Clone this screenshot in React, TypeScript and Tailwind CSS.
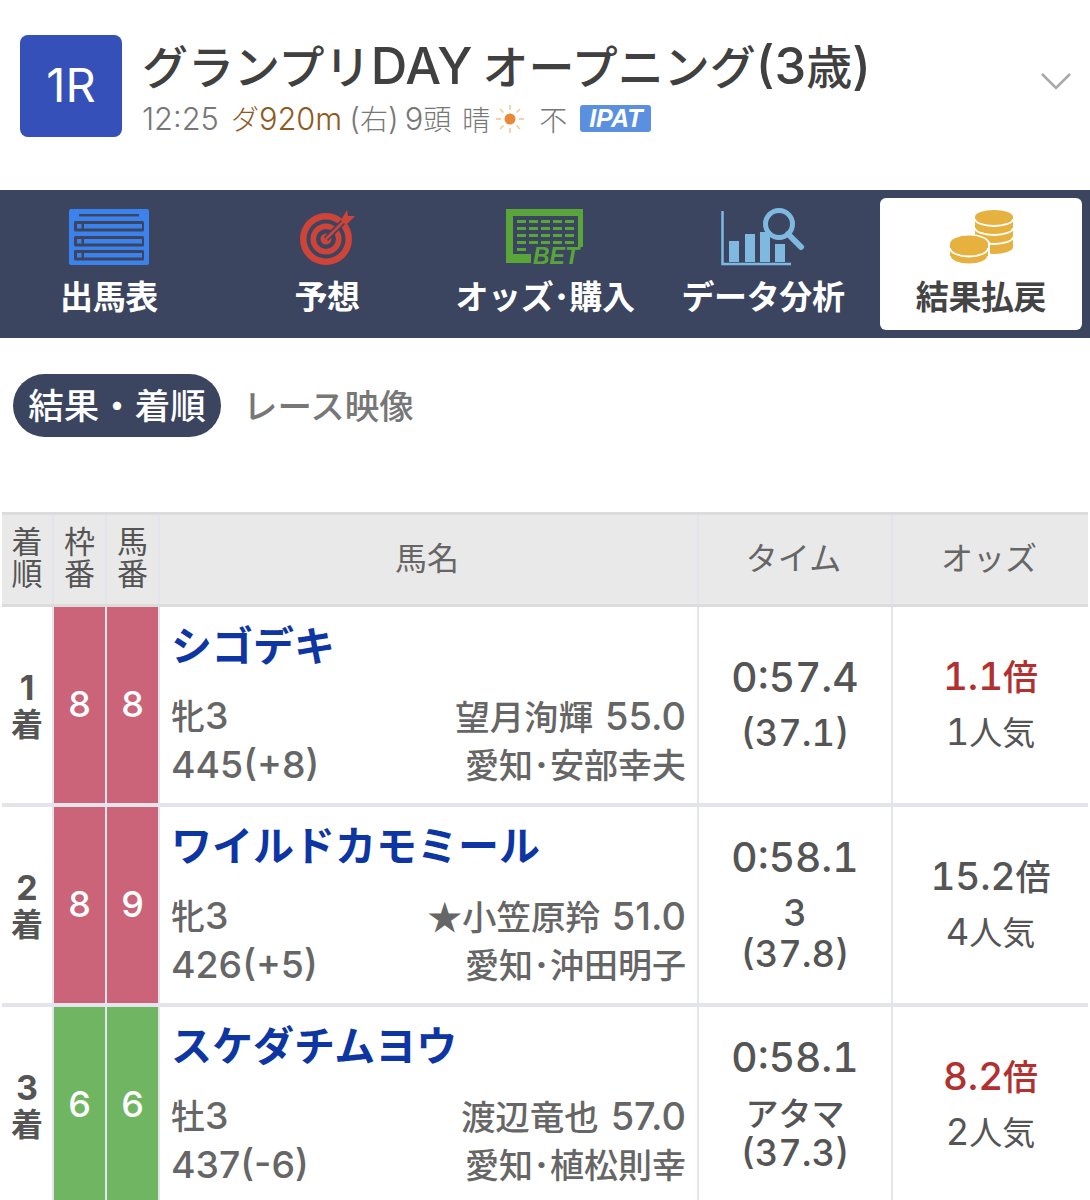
import React from "react";

function T({ children, tnum }: { children: string; tnum?: boolean }) {
  const parts = children.split(/([0-9A-Za-z:.()+\-]+)/);
  return (
    <>
      {parts.map((p, i) =>
        i % 2 === 1 ? (
          <span key={i} className={`text-[1.1em] [font-family:Inter,sans-serif] ${tnum ? "tabular-nums" : ""}`}>{p}</span>
        ) : (
          <span key={i}>{p}</span>
        )
      )}
    </>
  );
}

const NAVY = "#3c4560";

function ListIcon() {
  return (
    <svg width="82" height="58" viewBox="0 0 82 58">
      <rect x="1" y="1" width="80" height="56" rx="2" fill="#3b82ec" />
      <rect x="11" y="6" width="60" height="2.4" fill={NAVY} />
      {[13, 28, 42].map((y) => (
        <g key={y}>
          <rect x="6" y={y} width="70" height="10.5" rx="1.5" fill={NAVY} />
          <rect x="9" y={y + 3} width="4.5" height="4.5" fill="#3b82ec" />
          <rect x="16" y={y + 3} width="58" height="4.5" fill="#3b82ec" />
        </g>
      ))}
    </svg>
  );
}

function TargetIcon() {
  return (
    <svg width="56" height="58" viewBox="0 0 56 58">
      <circle cx="27" cy="31" r="26" fill="#cf4438" />
      <circle cx="27" cy="31" r="19.5" fill={NAVY} />
      <circle cx="27" cy="31" r="15.5" fill="#cf4438" />
      <circle cx="27" cy="31" r="10" fill={NAVY} />
      <circle cx="27" cy="31" r="5.5" fill="#cf4438" />
      <path d="M27 31 L47 11" stroke={NAVY} strokeWidth="6" />
      <path d="M27 31 L47 11" stroke="#cf4438" strokeWidth="2.5" />
      <path d="M42 12 L48 2 L49 8 L56 8 L47 17 Z" fill="#cf4438" />
    </svg>
  );
}

function BetIcon() {
  return (
    <svg width="78" height="58" viewBox="0 0 78 58" className="overflow-visible">
      <path d="M0 1 H77 V39 H72 V8 H7 V46 H25 V55 H0 Z" fill="#5aa53a" />
      {[12, 19, 26, 33].map((y) => (
        <g key={y} fill="#5aa53a">
          <rect x="11" y={y} width="9" height="3" />
          <rect x="23" y={y} width="9" height="3" />
          <rect x="35" y={y} width="9" height="3" />
          <rect x="47" y={y} width="9" height="3" />
          <rect x="59" y={y} width="9" height="3" />
        </g>
      ))}
      <rect x="11" y="40" width="9" height="3" fill="#5aa53a" />
      <text x="27" y="56" fill="#5aa53a" fontSize="23" fontWeight="700" fontStyle="italic" fontFamily="Liberation Sans, sans-serif">BET</text>
    </svg>
  );
}

function ChartIcon() {
  return (
    <svg width="84" height="58" viewBox="0 0 84 58">
      <path d="M1.5 3 V56 H70" fill="none" stroke="#7fb9df" strokeWidth="2.5" />
      <rect x="8" y="33" width="10" height="21" fill="#7fb9df" />
      <rect x="24" y="26" width="10" height="28" fill="#7fb9df" />
      <rect x="39" y="24" width="10" height="30" fill="#7fb9df" />
      <rect x="54" y="36" width="10" height="18" fill="#7fb9df" />
      <circle cx="58" cy="16" r="13.5" fill={NAVY} stroke="#7fb9df" strokeWidth="5" />
      <path d="M67 26 L80 39" stroke="#7fb9df" strokeWidth="6" strokeLinecap="round" />
    </svg>
  );
}

function Stack({ cx, rx, top, bottom, arcs, ry }: { cx: number; rx: number; top: number; bottom: number; arcs: number[]; ry: number }) {
  return (
    <g>
      <path d={`M${cx - rx} ${top} V${bottom} A${rx} ${ry} 0 0 0 ${cx + rx} ${bottom} V${top} Z`} fill="#e6b13f" />
      <ellipse cx={cx} cy={top} rx={rx} ry={ry} fill="#e6b13f" />
      {arcs.map((a) => (
        <path key={a} d={`M${cx - rx} ${a} A${rx} ${ry} 0 0 0 ${cx + rx} ${a}`} fill="none" stroke="#fff" strokeWidth="1.8" />
      ))}
    </g>
  );
}

function CoinIcon() {
  return (
    <svg width="66" height="58" viewBox="0 0 66 58">
      <Stack cx={46} rx={19} top={9} bottom={39} ry={7} arcs={[11, 20, 29]} />
      <ellipse cx="21" cy="36" rx="21" ry="10" fill="#fff" />
      <path d="M0 36 V48 H42 V36 Z" fill="#fff" />
      <Stack cx={21} rx={19} top={36} bottom={48} ry={8.5} arcs={[40, 48]} />
    </svg>
  );
}

function Sun() {
  return (
    <svg width="30" height="30" viewBox="0 0 30 30">
      <circle cx="15" cy="15" r="5.5" fill="#e8893a" />
      <g stroke="#efc590" strokeWidth="1.4">
        <path d="M15 1 V6 M15 24 V29 M1 15 H6 M24 15 H29 M5 5 L8.5 8.5 M21.5 21.5 L25 25 M25 5 L21.5 8.5 M8.5 21.5 L5 25" />
      </g>
    </svg>
  );
}

function Tab({ icon, label, active }: { icon: React.ReactNode; label: string; active?: boolean }) {
  return (
    <div className={`flex h-[132px] flex-col items-center justify-start rounded-[6px] pt-[10px] ${active ? "mx-[8px] bg-white text-[#444444]" : "text-white"}`}>
      <div className="flex h-[58px] items-center justify-center">{icon}</div>
      <div className="mt-[7px] whitespace-nowrap text-[33px] font-bold leading-[44px] tracking-[-0.4px]">{label}</div>
    </div>
  );
}

type Row = {
  rank: string;
  waku: string;
  uma: string;
  color: string;
  name: string;
  sex: string;
  jockey: string;
  weight: string;
  trainer: string;
  time: string;
  margin?: string;
  last: string;
  odds: string;
  pop: string;
  hot: boolean;
};

const rows: Row[] = [
  { rank: "1", waku: "8", uma: "8", color: "bg-[#cb6478]", name: "シゴデキ", sex: "牝3", jockey: "望月洵輝 55.0", weight: "445(+8)", trainer: "愛知･安部幸夫", time: "0:57.4", last: "(37.1)", odds: "1.1倍", pop: "1人気", hot: true },
  { rank: "2", waku: "8", uma: "9", color: "bg-[#cb6478]", name: "ワイルドカモミール", sex: "牝3", jockey: "★小笠原羚 51.0", weight: "426(+5)", trainer: "愛知･沖田明子", time: "0:58.1", margin: "3", last: "(37.8)", odds: "15.2倍", pop: "4人気", hot: false },
  { rank: "3", waku: "6", uma: "6", color: "bg-[#70b562]", name: "スケダチムヨウ", sex: "牡3", jockey: "渡辺竜也 57.0", weight: "437(-6)", trainer: "愛知･植松則幸", time: "0:58.1", margin: "アタマ", last: "(37.3)", odds: "8.2倍", pop: "2人気", hot: true },
];

const cols = "grid grid-cols-[50px_51px_51px_537px_192px_195px] gap-x-[2px]";

export default function App() {
  return (
    <div className="h-[1200px] w-[1090px] overflow-hidden bg-white text-[#444444] [font-family:'Noto_Sans_CJK_JP',sans-serif]">
      <div className="flex h-[190px] items-start pl-[20px] pt-[35px]">
        <div className="flex h-[102px] w-[102px] items-center justify-center rounded-[8px] bg-[#3550b8] pb-[3px] text-[47px] leading-none text-white [font-family:Inter,sans-serif]">1R</div>
        <div className="ml-[20px] flex-1">
          <div className="-mt-[2px] whitespace-nowrap text-[46px] font-medium leading-[62px] text-[#404040]">
            <T>グランプリDAY</T>
            <span className="ml-[10px]"><T>オープニング(3歳)</T></span>
          </div>
          <div className="mt-[3px] flex items-center text-[28px] font-light leading-[36px] text-[#777777]">
            <span><T>12:25</T></span>
            <span className="ml-[12px] text-[#8f5a1f]"><T>ダ920m</T></span>
            <span className="ml-[7px]"><T>(右)</T></span>
            <span className="ml-[6px]"><T>9頭</T></span>
            <span className="ml-[11px]">晴</span>
            <span className="ml-[5px]"><Sun /></span>
            <span className="ml-[14px]">不</span>
            <span className="ml-[13px] flex h-[27px] w-[71px] items-center justify-center rounded-[3px] bg-[#5b90e0] text-[25px] font-bold italic leading-none text-white [font-family:'Liberation_Sans',sans-serif]">IPAT</span>
          </div>
        </div>
        <svg className="mr-[18px] mt-[36px]" width="32" height="20" viewBox="0 0 32 20">
          <path d="M2 3 L16 17 L30 3" fill="none" stroke="#a9a9a9" strokeWidth="2.6" />
        </svg>
      </div>

      <div className="grid h-[148px] grid-cols-5 items-center bg-[#3c4560]">
        <Tab icon={<ListIcon />} label="出馬表" />
        <Tab icon={<TargetIcon />} label="予想" />
        <Tab icon={<BetIcon />} label="オッズ･購入" />
        <Tab icon={<ChartIcon />} label="データ分析" />
        <Tab icon={<CoinIcon />} label="結果払戻" active />
      </div>

      <div className="flex h-[174px] items-start pl-[13px] pt-[36px]">
        <div className="flex h-[63px] w-[208px] items-center justify-center rounded-full bg-[#3c4560] pb-[3px] text-[35.5px] font-medium leading-none text-white">結果・着順</div>
        <div className="ml-[22px] flex h-[63px] items-center pb-[3px] text-[34.5px] font-medium leading-none text-[#777777]">レース映像</div>
      </div>

      <div className="mx-[2px] bg-[#e3e4ec]">
        <div className="h-[3px] bg-[#dcdcdc]" />
        <div className={`${cols}`}>
          {["着順", "枠番", "馬番"].map((t) => (
            <div key={t} className="flex h-[89px] items-center justify-center bg-[#e9e9e9] px-[5px] pb-[7px] text-center text-[31px] leading-[32px] text-[#555555]">{t}</div>
          ))}
          {["馬名", "タイム", "オッズ"].map((t) => (
            <div key={t} className="flex h-[89px] items-center justify-center bg-[#e9e9e9] pb-[7px] pr-[3px] text-[32px] leading-none text-[#666666]">{t}</div>
          ))}
        </div>
        <div className="h-[3px] bg-[#dcdcdc]" />
        {rows.map((r) => (
          <div key={r.rank} className={`${cols} mb-[4px] h-[196px]`}>
            <div className="flex flex-col items-center justify-center bg-white text-[32px] font-bold leading-[34px] text-[#555555]">
              <span className="text-[34px] font-bold leading-[34px] [font-family:Inter,sans-serif]">{r.rank}</span>
              <span>着</span>
            </div>
            <div className={`${r.color} flex items-center justify-center pb-[3px] text-[36px] font-medium leading-none text-white [font-family:Inter,sans-serif]`}>{r.waku}</div>
            <div className={`${r.color} flex items-center justify-center pb-[3px] text-[36px] font-medium leading-none text-white [font-family:Inter,sans-serif]`}>{r.uma}</div>
            <div className="flex flex-col bg-white pl-[11px] pr-[11px] pt-[11px]">
              <div className="whitespace-nowrap text-[41px] font-bold leading-[50px] text-[#0e36a3]">{r.name}</div>
              <div className="mt-[23px] flex justify-between text-[34px] font-medium leading-[48px] text-[#666666]">
                <span><T>{r.sex}</T></span>
                <span className="text-[34.5px] [word-spacing:4px]"><T>{r.jockey}</T></span>
              </div>
              <div className="flex justify-between text-[34px] font-medium leading-[48px] text-[#666666]">
                <span><T>{r.weight}</T></span>
                <span><T>{r.trainer}</T></span>
              </div>
            </div>
            <div className="flex flex-col items-center justify-center bg-white pb-[3px] text-[33px] font-medium leading-[40px] text-[#555555]">
              <span className="mb-[12px] text-[37px] leading-[44px]"><T tnum>{r.time}</T></span>
              {r.margin && <span><T tnum>{r.margin}</T></span>}
              <span><T tnum>{r.last}</T></span>
            </div>
            <div className="flex flex-col items-center justify-center gap-[11px] bg-white pb-[4px] leading-[44px]">
              <span className={`text-[35px] font-medium ${r.hot ? "text-[#b13030]" : "text-[#555555]"}`}><T tnum>{r.odds}</T></span>
              <span className="text-[33px] text-[#555555]"><T tnum>{r.pop}</T></span>
            </div>
          </div>
        ))}
      </div>
    </div>
  );
}
